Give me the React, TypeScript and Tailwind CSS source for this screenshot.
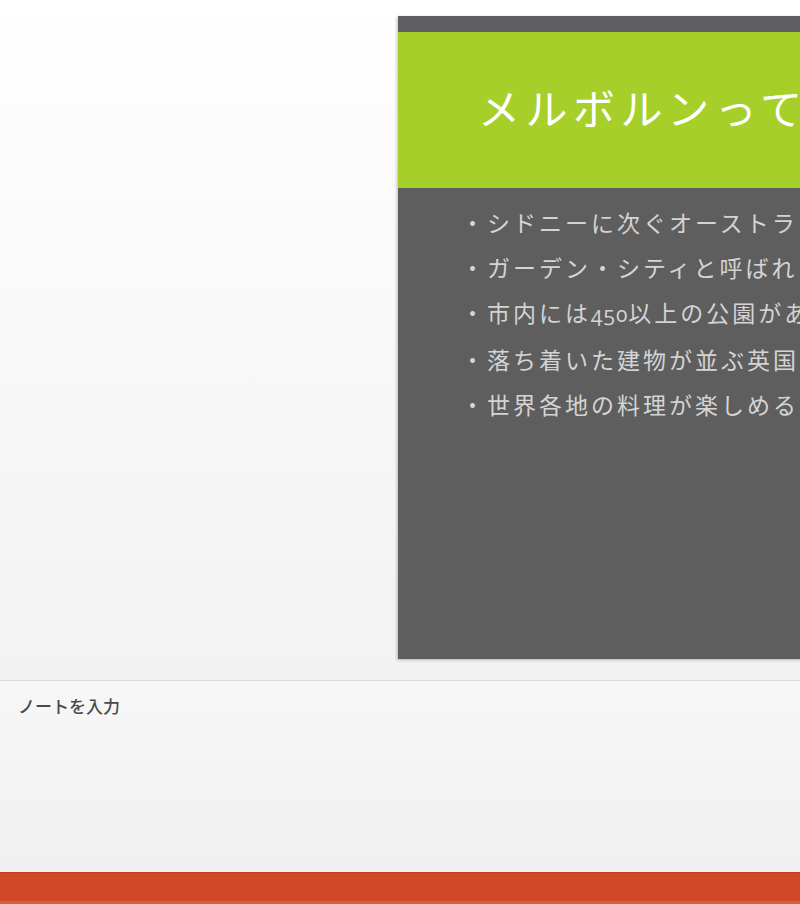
import React from 'react';

const jp = { fontFamily: '"Noto Sans CJK JP", "Noto Sans", sans-serif' };

const bullets: React.ReactNode[] = [
  'シドニーに次ぐオーストラリア第二の都市',
  'ガーデン・シティと呼ばれる緑豊かな街',
  <>
    市内には<span className="oldstyle-nums text-[21px] tracking-[1px]" style={{ fontFamily: '"Open Sans", sans-serif' }}>450</span>以上の公園がある
  </>,
  '落ち着いた建物が並ぶ英国風の街並み',
  '世界各地の料理が楽しめる',
];

const Slide: React.FC = () => {
  return (
    <div className="w-[900px] h-[643px] shrink-0 flex flex-col bg-[#5e5e5e] shadow-[-1px_1px_3px_rgba(0,0,0,0.25)]">
      <div className="h-[16px] bg-[#5f5f61]" />
      <div className="h-[156px] bg-[#a6cf2a] flex items-center pl-[80px] pb-[6px]">
        <h1 className="text-white text-[42px] tracking-[5.5px] font-normal whitespace-nowrap leading-none">
          メルボルンってどんな街？
        </h1>
      </div>
      <ul className="pt-[12px] pl-[63px] text-[#d4d4d4] text-[23px] tracking-[3px] leading-[45px]">
        {bullets.map((b, i) => (
          <li key={i} className="whitespace-nowrap">
            ・{b}
          </li>
        ))}
      </ul>
    </div>
  );
};

export default function App() {
  return (
    <div className="w-[800px] h-[904px] overflow-hidden flex flex-col bg-[#f0f0f0]" style={jp}>
      <div className="h-[681px] shrink-0 flex pl-[398px] pt-[16px] bg-gradient-to-b from-white to-[#f2f2f2] border-b border-[#d9d9d9]">
        <Slide />
      </div>
      <div className="flex-1 bg-gradient-to-b from-[#f7f7f7] to-[#f0f0f0] px-[18px] pt-[12px]">
        <p className="text-[17px] text-[#4a4a4a] font-medium">ノートを入力</p>
      </div>
      <div className="h-[32px] shrink-0 bg-[#d24726] border-t border-[#bf3d1f] flex flex-col justify-end">
        <div className="h-[3px] bg-[#c9673e]" />
      </div>
    </div>
  );
}
